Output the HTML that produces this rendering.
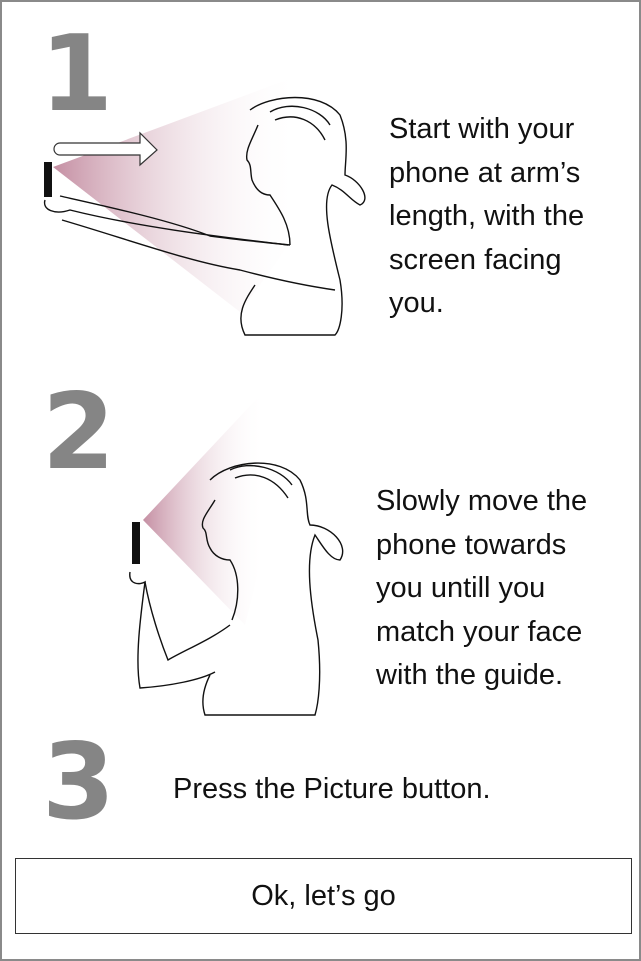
<!DOCTYPE html>
<html><head><meta charset="utf-8"><style>
html,body{margin:0;padding:0;background:#fff}
body{width:641px;height:961px;position:relative;overflow:hidden;font-family:"Liberation Sans",sans-serif}
.frame{position:absolute;left:0;top:0;width:637px;height:957px;border:2px solid #8a8a8a}
.num{position:absolute;font-family:"DejaVu Sans",sans-serif;font-weight:bold;color:#858585;font-size:105px;line-height:1}
.t{position:absolute;font-size:29px;line-height:43.5px;color:#111}
.btn{position:absolute;left:15px;top:858px;width:615px;height:74px;border:1px solid #333;text-align:center;line-height:74px;font-size:29px;color:#111}
svg{position:absolute;left:0;top:0}
</style></head><body>
<div class="frame"></div>
<svg width="641" height="961">
<defs>
<linearGradient id="g1" x1="0" x2="1" y1="0" y2="0"><stop offset="0" stop-color="#c58fa3"/><stop offset="1" stop-color="#fff" stop-opacity="0"/></linearGradient>
<linearGradient id="g2" x1="0" x2="1" y1="0" y2="0"><stop offset="0" stop-color="#c58fa3"/><stop offset="1" stop-color="#fff" stop-opacity="0"/></linearGradient>
</defs>
<polygon points="53,167 300,75 300,230 240,312" fill="url(#g1)"/>
<rect x="44" y="162" width="8" height="35" fill="#111"/>
<path d="M60,143 H140 V133 L157,150 L140,165 V155 H60 A6,6 0 0 1 60,143 Z" fill="#fff" stroke="#333" stroke-width="1.2"/>
<g fill="none" stroke="#111" stroke-width="1.4">
<path d="M45,200 C42,210 55,215 70,210 C150,230 250,240 288,245"/>
<path d="M60,196 C100,205 170,220 210,236 C240,240 270,243 290,245"/>
<path d="M62,220 C130,240 190,262 240,270 C270,278 300,285 335,290"/>
<path d="M250,110 C270,95 320,90 340,115 C350,140 345,160 345,175 C360,180 372,200 360,205 C350,200 345,190 332,185 C320,200 330,240 340,280 C345,310 340,330 335,335 L245,335 C235,315 245,300 255,285"/>
<path d="M258,125 C252,140 245,150 247,160 C252,165 250,172 252,180 C256,190 262,195 270,195 C280,210 290,225 290,245"/>
<path d="M270,112 C290,100 320,108 330,125 M275,120 C295,112 315,120 325,140"/>
</g>
<polygon points="143,520 265,390 265,545 245,625" fill="url(#g2)"/>
<rect x="132" y="522" width="8" height="42" fill="#111"/>
<g fill="none" stroke="#111" stroke-width="1.4">
<path d="M130,572 C128,585 140,585 145,582 C140,620 135,660 140,688 C170,686 200,680 215,672"/>
<path d="M145,582 C150,610 160,640 168,660 C185,650 210,640 230,625"/>
<path d="M210,480 C230,460 280,455 300,480 C310,500 305,515 310,525 C330,525 350,545 340,560 C330,560 322,545 315,535 C305,560 310,600 318,640 C322,680 318,705 315,715 L205,715 C200,700 205,685 210,675"/>
<path d="M215,500 C208,512 200,520 203,528 C208,532 205,540 210,548 C214,556 222,560 230,560 C240,575 240,600 232,620"/>
<path d="M230,470 C250,460 280,468 292,485 M235,478 C255,470 275,478 288,498"/>
</g>
</svg>
<div class="num" style="left:40px;top:22px">1</div>
<div class="num" style="left:42px;top:380px">2</div>
<div class="num" style="left:42px;top:730px">3</div>
<div class="t" style="left:389px;top:108px">Start with your<br>phone at arm’s<br>length, with the<br>screen facing<br>you.</div>
<div class="t" style="left:376px;top:480px">Slowly move the<br>phone towards<br>you untill you<br>match your face<br>with the guide.</div>
<div class="t" style="left:173px;top:768px">Press the Picture button.</div>
<div class="btn">Ok, let’s go</div>
</body></html>
